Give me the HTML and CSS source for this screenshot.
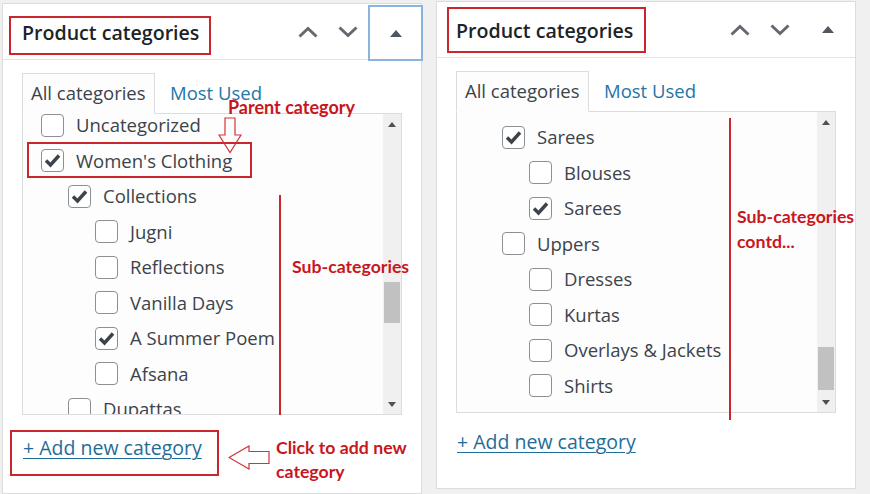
FILE: index.html
```html
<!DOCTYPE html>
<html lang="en">
<head>
<meta charset="utf-8">
<title>Product categories</title>
<link rel="stylesheet" href="styles.css">
</head>
<body>
<div class="page">

  <section class="panel panel-left">
    <header class="panel-head">
      <h2 class="panel-title">Product categories</h2>
      <div class="handles">
        <button class="handle" aria-label="Move up"><svg width="20" height="12" viewBox="0 0 20 12"><polyline points="1.5,10.5 10,2.5 18.5,10.5" /></svg></button>
        <button class="handle" aria-label="Move down"><svg width="20" height="12" viewBox="0 0 20 12"><polyline points="1.5,1.5 10,9.5 18.5,1.5" /></svg></button>
        <button class="handle toggle focused" aria-label="Toggle panel"><span class="tri-up"></span></button>
      </div>
    </header>
    <div class="panel-body">
      <div class="tabs">
        <span class="tab active">All categories</span>
        <span class="tab">Most Used</span>
      </div>
      <div class="tab-box">
        <div class="list-clip">
          <ul class="cat-list cat-list-left">
            <li class="row lv0"><span class="cb"></span>Uncategorized</li>
            <li class="row lv0"><span class="cb checked"><svg viewBox="0 0 23 23"><polyline points="5,11.5 9.5,16 18,6.5"/></svg></span>Women's Clothing</li>
            <li class="row lv1"><span class="cb checked"><svg viewBox="0 0 23 23"><polyline points="5,11.5 9.5,16 18,6.5"/></svg></span>Collections</li>
            <li class="row lv2"><span class="cb"></span>Jugni</li>
            <li class="row lv2"><span class="cb"></span>Reflections</li>
            <li class="row lv2"><span class="cb"></span>Vanilla Days</li>
            <li class="row lv2"><span class="cb checked"><svg viewBox="0 0 23 23"><polyline points="5,11.5 9.5,16 18,6.5"/></svg></span>A Summer Poem</li>
            <li class="row lv2"><span class="cb"></span>Afsana</li>
            <li class="row lv1"><span class="cb"></span>Dupattas</li>
          </ul>
        </div>
        <div class="scrollbar">
          <span class="sb-btn"><span class="sb-up"></span></span>
          <span class="sb-track"><span class="sb-thumb thumb-left"></span></span>
          <span class="sb-btn"><span class="sb-down"></span></span>
        </div>
      </div>
      <a class="add-link add-link-left" href="#">+ Add new category</a>
    </div>

    <div class="note-box nb-title-left"></div>
    <div class="note-box nb-womens"></div>
    <div class="note-box nb-add"></div>
    <div class="note-line nl-left"></div>
    <p class="note-text nt-parent">Parent category</p>
    <p class="note-text nt-sub">Sub-categories</p>
    <p class="note-text nt-click">Click to add new<br>category</p>
    <svg class="note-arrow na-down" viewBox="0 0 24 37"><path d="M7 1 H17 V18 H23 L12 35.5 L1 18 H7 Z"/></svg>
    <svg class="note-arrow na-left" viewBox="0 0 42 25"><path d="M1 12.5 L21 1 V6.5 H41 V18.5 H21 V24 Z"/></svg>
  </section>

  <section class="panel panel-right">
    <header class="panel-head">
      <h2 class="panel-title">Product categories</h2>
      <div class="handles">
        <button class="handle" aria-label="Move up"><svg width="20" height="12" viewBox="0 0 20 12"><polyline points="1.5,10.5 10,2.5 18.5,10.5" /></svg></button>
        <button class="handle" aria-label="Move down"><svg width="20" height="12" viewBox="0 0 20 12"><polyline points="1.5,1.5 10,9.5 18.5,1.5" /></svg></button>
        <button class="handle toggle" aria-label="Toggle panel"><span class="tri-up"></span></button>
      </div>
    </header>
    <div class="panel-body">
      <div class="tabs">
        <span class="tab active">All categories</span>
        <span class="tab">Most Used</span>
      </div>
      <div class="tab-box">
        <div class="list-clip">
          <ul class="cat-list cat-list-right">
            <li class="row lv1"><span class="cb checked"><svg viewBox="0 0 23 23"><polyline points="5,11.5 9.5,16 18,6.5"/></svg></span>Sarees</li>
            <li class="row lv2"><span class="cb"></span>Blouses</li>
            <li class="row lv2"><span class="cb checked"><svg viewBox="0 0 23 23"><polyline points="5,11.5 9.5,16 18,6.5"/></svg></span>Sarees</li>
            <li class="row lv1"><span class="cb"></span>Uppers</li>
            <li class="row lv2"><span class="cb"></span>Dresses</li>
            <li class="row lv2"><span class="cb"></span>Kurtas</li>
            <li class="row lv2"><span class="cb"></span>Overlays &amp; Jackets</li>
            <li class="row lv2"><span class="cb"></span>Shirts</li>
          </ul>
        </div>
        <div class="scrollbar">
          <span class="sb-btn"><span class="sb-up"></span></span>
          <span class="sb-track"><span class="sb-thumb thumb-right"></span></span>
          <span class="sb-btn"><span class="sb-down"></span></span>
        </div>
      </div>
      <a class="add-link add-link-right" href="#">+ Add new category</a>
    </div>

    <div class="note-box nb-title-right"></div>
    <div class="note-line nl-right"></div>
    <p class="note-text nt-contd">Sub-categories<br>contd...</p>
  </section>

</div>
</body>
</html>
```

FILE: styles.css
```css
* { box-sizing: border-box; }

html, body {
  margin: 0;
  padding: 0;
  background: #f0f0f1;
}

body {
  font-family: "Open Sans", "Noto Sans", sans-serif;
  color: #3c434a;
}

.page {
  display: flex;
  align-items: flex-start;
  width: 870px;
  height: 494px;
}

.panel {
  position: relative;
  width: 420px;
  background: #fff;
  border: 1px solid #dcdcde;
  display: flex;
  flex-direction: column;
}

.panel-left {
  margin: 3px 0 0 2px;
  height: 491px;
}

.panel-right {
  margin: 1px 0 0 14px;
  height: 488px;
}

/* header */
.panel-head {
  height: 56px;
  border-bottom: 1px solid #e2e3e5;
  display: flex;
  align-items: center;
  justify-content: space-between;
  padding-left: 19px;
}

.panel-title {
  margin: 2px 0 0 0;
  font-size: 19.6px;
  font-weight: 600;
  color: #1d2327;
}

.handles {
  display: flex;
  align-self: stretch;
}

.handle {
  width: 40px;
  height: 55px;
  border: 0;
  background: none;
  padding: 0;
  display: flex;
  align-items: center;
  justify-content: center;
}

.handle svg {
  fill: none;
  stroke: #646970;
  stroke-width: 3;
}

.handle.toggle {
  width: 55px;
  border: 2px solid transparent;
}

.handle.focused {
  border-color: #8bb3de;
  margin-top: 1px;
  height: 56px;
  margin-right: -2px;
}

.tri-up {
  width: 0;
  height: 0;
  border-left: 6px solid transparent;
  border-right: 6px solid transparent;
  border-bottom: 7px solid #50575e;
}

/* body */
.panel-body {
  padding: 13px 19px 0 19px;
  display: flex;
  flex-direction: column;
}

.tabs {
  display: flex;
  align-items: stretch;
  height: 41px;
  position: relative;
  z-index: 1;
  margin-bottom: -1px;
}

.tab {
  display: flex;
  align-items: center;
  font-size: 18.5px;
  color: #2376a8;
  padding: 0 0 2px 15px;
}

.tab.active {
  width: 133px;
  padding-left: 8px;
  color: #3c434a;
  background: #fdfdfd;
  border: 1px solid #dcdcde;
  border-bottom: 1px solid #fdfdfd;
}

.tab-box {
  width: 380px;
  height: 302px;
  border: 1px solid #dcdcde;
  background: #fdfdfd;
  display: flex;
}

.list-clip {
  flex: 1;
  overflow: hidden;
}

.cat-list {
  list-style: none;
  margin: 0;
  padding: 0;
}

.cat-list-left { margin-top: -7.25px; }
.cat-list-right { padding-top: 6.75px; }

.row {
  height: 35.5px;
  display: flex;
  align-items: center;
  font-size: 18.5px;
  color: #3c434a;
  white-space: nowrap;
}

.row.lv0 { padding-left: 18px; }
.row.lv1 { padding-left: 45px; }
.row.lv2 { padding-left: 72px; }

.cb {
  flex: none;
  width: 23px;
  height: 23px;
  border: 1px solid #8c8f94;
  border-radius: 4px;
  background: #fff;
  margin-right: 12px;
  margin-top: 1px;
  position: relative;
}

.cb svg {
  position: absolute;
  left: -1px;
  top: -1px;
  width: 23px;
  height: 23px;
  fill: none;
  stroke: #3c434a;
  stroke-width: 3.4;
}

/* scrollbar */
.scrollbar {
  width: 18px;
  flex: none;
  background: #f0f0f0;
  display: flex;
  flex-direction: column;
}

.sb-btn {
  height: 20px;
  display: flex;
  align-items: center;
  justify-content: center;
}

.sb-up {
  width: 0; height: 0;
  border-left: 4.5px solid transparent;
  border-right: 4.5px solid transparent;
  border-bottom: 5px solid #505050;
}

.sb-down {
  width: 0; height: 0;
  border-left: 4.5px solid transparent;
  border-right: 4.5px solid transparent;
  border-top: 5px solid #505050;
}

.sb-track {
  flex: 1;
  display: flex;
  flex-direction: column;
  padding: 0 1px 0 1px;
}

.sb-thumb {
  display: block;
  background: #c1c1c1;
}

.thumb-left { margin-top: 148px; height: 41px; }
.thumb-right { margin-top: 215px; height: 43px; }

/* link */
.add-link {
  align-self: flex-start;
  font-size: 19.5px;
  line-height: 26px;
  color: #1f6d97;
  text-decoration: underline;
  text-underline-offset: 3px;
  text-decoration-thickness: 1px;
  margin-left: 1px;
}

.add-link-left { margin-top: 20px; }
.add-link-right { margin-top: 16px; }

/* annotations */
.note-box {
  position: absolute;
  border: 2px solid #c9262e;
}

.nb-title-left { left: 6px; top: 12px; width: 202px; height: 39px; }
.nb-womens { left: 24px; top: 138px; width: 225px; height: 36px; }
.nb-add { left: 7px; top: 426px; width: 209px; height: 46px; }
.nb-title-right { left: 10px; top: 5px; width: 199px; height: 46px; }

.note-line {
  position: absolute;
  width: 2px;
  background: #c9262e;
}

.nl-left { left: 276px; top: 191px; height: 220px; }
.nl-right { left: 292px; top: 116px; height: 302px; }

.note-text {
  position: absolute;
  margin: 0;
  font-family: "Lato", "Open Sans", sans-serif;
  font-weight: 700;
  font-size: 17.7px;
  color: #c8161e;
  white-space: nowrap;
}

.nt-parent { left: 225px; top: 93px; line-height: 20px; font-size: 18px; }
.nt-sub { left: 289px; top: 253px; line-height: 20px; }
.nt-click { left: 273px; top: 432px; line-height: 24px; }
.nt-contd { left: 300px; top: 202px; line-height: 25px; }

.note-arrow {
  position: absolute;
  fill: #fff;
  fill-opacity: 0;
  stroke: #d0343a;
  stroke-width: 1.2;
}

.na-down { left: 215px; top: 113px; width: 24px; height: 37px; }
.na-left { left: 225px; top: 441px; width: 42px; height: 25px; }
```
